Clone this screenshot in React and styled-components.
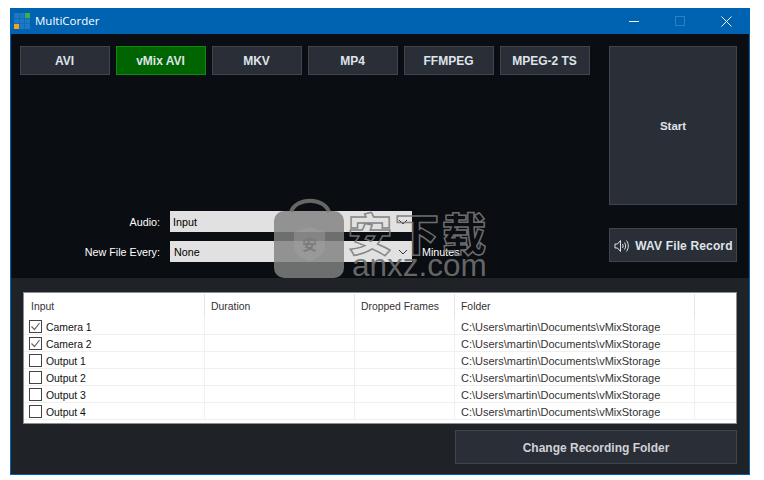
import React from 'react';
import styled, { createGlobalStyle } from 'styled-components';

const GlobalStyle = createGlobalStyle`
	html, body {
		margin: 0;
		padding: 0;
		background: #fff;
	}
	body {
		font-family: "Liberation Sans", Arial, sans-serif;
		font-size: 12px;
	}
`;

const Page = styled.div`
	width: 764px;
	height: 480px;
	padding: 8px 0 0 10px;
	box-sizing: border-box;
	overflow: hidden;
`;

const Window = styled.div`
	position: relative;
	width: 740px;
	height: 467px;
	box-sizing: border-box;
	border: solid #0063b1;
	border-width: 0 1px 1px 1px;
	display: flex;
	flex-direction: column;
	overflow: hidden;
`;

const TitleBar = styled.div`
	height: 26px;
	flex: none;
	background: #0063b1;
	display: flex;
	align-items: center;
	padding-left: 3px;
	color: #fff;
`;

const AppName = styled.span`
	font-family: "Open Sans", sans-serif;
	font-size: 11.5px;
	margin-left: 5px;
	padding-bottom: 2px;
	flex: 1;
`;

const WindowButton = styled.div`
	width: 46px;
	height: 26px;
	display: flex;
	align-items: center;
	justify-content: center;
`;

const TopPanel = styled.div`
	height: 244px;
	flex: none;
	box-sizing: border-box;
	background: #0a0d11;
	padding: 12px 12px 16px 9px;
	display: flex;
	justify-content: space-between;
`;

const LeftColumn = styled.div`
	display: flex;
	flex-direction: column;
	justify-content: space-between;
	width: 570px;
`;

const FormatRow = styled.div`
	display: flex;
	gap: 6px;
`;

const DarkButton = styled.div`
	box-sizing: border-box;
	display: flex;
	align-items: center;
	justify-content: center;
	background: #2a2f37;
	border: 1px solid #3f444d;
	color: #dfe3ea;
	font-family: "Liberation Sans", Arial, sans-serif;
	font-weight: bold;
	font-size: 12px;
`;

const FormatButton = styled(DarkButton)`
	width: 90px;
	height: 29px;
	padding-right: 1px;
	background: ${p => (p.$active ? '#006400' : '#2a2f37')};
	border-color: ${p => (p.$active ? '#0f8a0f' : '#3f444d')};
`;

const FormGrid = styled.div`
	display: grid;
	grid-template-columns: 140px 242px auto;
	column-gap: 10px;
	row-gap: 9px;
	align-items: center;
	color: #fff;
	font-size: 10.75px;
`;

const FieldLabel = styled.label`
	text-align: right;
`;

const Select = styled.div`
	height: 21px;
	background: #e1e1e1;
	color: #000;
	display: flex;
	align-items: center;
	justify-content: space-between;
	padding: 0 3px 0 ${p => p.$inset || 3}px;
	font-size: 10.75px;
`;

const RightColumn = styled.div`
	width: 128px;
	display: flex;
	flex-direction: column;
	gap: 23px;
`;

const StartButton = styled(DarkButton)`
	height: 159px;
	font-size: 11.5px;
`;

const WavButton = styled(DarkButton)`
	height: 34px;
	gap: 5px;
	padding: 1px 0 0 1px;
	font-size: 12px;
	letter-spacing: 0.15px;
	white-space: nowrap;
`;

const BottomPanel = styled.div`
	flex: 1;
	background: #1f2327;
	padding: 14px 12px 10px 12px;
	display: flex;
	flex-direction: column;
	align-items: flex-end;
	gap: 6px;
`;

const Table = styled.div`
	width: 714px;
	height: 132px;
	box-sizing: border-box;
	flex: none;
	background: #fff;
	border: 1px solid #8c8f92;
	color: #111;
	font-size: 10.4px;
`;

const Row = styled.div`
	display: grid;
	grid-template-columns: 181px 150px 100px 240px 1fr;
	height: ${p => (p.$header ? '25px' : '17px')};
	box-sizing: border-box;
	border-bottom: ${p => (p.$header ? 'none' : '1px solid #f0f0f0')};
	align-items: stretch;
`;

const HeadCell = styled.div`
	display: flex;
	align-items: center;
	padding-left: 6px;
	color: #333;
	margin: 1px 0 0;
	border-right: 1px solid #e5e5e5;
	&:first-child {
		padding-left: 7px;
	}
	&:last-child {
		border-right: none;
	}
`;

const Cell = styled.div`
	display: flex;
	align-items: center;
	gap: 4px;
	padding-left: 5px;
	overflow: hidden;
	white-space: nowrap;
	border-right: 1px solid #f0f0f0;
	&:last-child {
		border-right: none;
	}
`;

const InputName = styled.span`
	padding-top: 2px;
`;

const PathText = styled.span`
	padding-top: 1px;
`;

const PathCell = styled(Cell)`
	padding-left: 6px;
	color: #333;
	font-size: 11px;
`;

const CheckBox = styled.span`
	width: 13px;
	height: 13px;
	flex: none;
	box-sizing: border-box;
	border: 1px solid #444;
	background: #fff;
	display: flex;
	align-items: center;
	justify-content: center;
`;

const ChangeButton = styled(DarkButton)`
	width: 282px;
	height: 34px;
	padding-top: 1px;
	color: #cfd2d6;
	font-size: 12px;
`;

const Watermark = styled.div`
	position: absolute;
	left: 263px;
	top: 190px;
	width: 224px;
	height: 80px;
	pointer-events: none;
	overflow: hidden;
`;

const WatermarkMark = styled.span`
	position: absolute;
	left: 28px;
	top: 37px;
	color: #7c7c7c;
	font-family: "Noto Sans CJK SC", sans-serif;
	font-weight: bold;
	font-size: 15px;
	line-height: 18px;
`;

const WatermarkText = styled.div`
	position: absolute;
	left: 74px;
	top: 12px;
	color: transparent;
	-webkit-text-stroke: 1.5px rgba(122, 122, 122, 0.9);
	font-family: "Noto Sans CJK SC", sans-serif;
	font-weight: 900;
	font-size: 44px;
	line-height: 44px;
	letter-spacing: 3px;
	white-space: nowrap;
`;

const WatermarkDomain = styled.div`
	position: absolute;
	left: 78px;
	top: 54px;
	color: rgba(112, 112, 112, 0.92);
	font-family: "Liberation Sans", Arial, sans-serif;
	font-size: 31.5px;
	line-height: 26px;
`;

const formats = ['AVI', 'vMix AVI', 'MKV', 'MP4', 'FFMPEG', 'MPEG-2 TS'];
const inputs = [
	{ name: 'Camera 1', checked: true },
	{ name: 'Camera 2', checked: true },
	{ name: 'Output 1' },
	{ name: 'Output 2' },
	{ name: 'Output 3' },
	{ name: 'Output 4' },
];

const Logo = () => {
	const cells = [];
	for (let y = 0; y < 3; y++) {
		for (let x = 0; x < 3; x++) {
			let fill = '#1f78c4';
			if (x === 2 && y === 0) fill = '#3cb043';
			if (x === 0 && y === 2) fill = '#f7a21b';
			cells.push(<rect key={x + '-' + y} x={x * 5.5} y={y * 5.5} width="5" height="5" fill={fill} />);
		}
	}
	return <svg width="16" height="16" viewBox="0 0 16 16">{cells}</svg>;
};

const Chevron = () => (
	<svg width="10" height="6" viewBox="0 0 10 6" style={{ marginRight: 1 }}>
		<path d="M1 1l4 4 4-4" fill="none" stroke="#333" strokeWidth="1" />
	</svg>
);

const Speaker = () => (
	<svg width="16" height="14" viewBox="0 0 16 14" fill="none" stroke="#dfe3ea" strokeWidth="1">
		<path d="M1 5h2.5L6.5 1.5v11L3.5 9H1z" />
		<path d="M8.5 5c.8 1.2.8 2.8 0 4" />
		<path d="M10.5 3.5c1.5 2 1.5 5 0 7" />
		<path d="M12.5 1.5c2.4 3.4 2.4 7.6 0 11" />
	</svg>
);

const Check = () => (
	<svg width="11" height="11" viewBox="0 0 11 11">
		<path d="M1.5 5.5l3 3 5-6.5" fill="none" stroke="#666" strokeWidth="1.2" />
	</svg>
);

const App = () => (
	<Page>
		<GlobalStyle />
		<Window>
			<TitleBar>
				<Logo />
				<AppName>MultiCorder</AppName>
				<WindowButton>
					<svg width="10" height="10"><path d="M0 5.5h10" stroke="#fff" /></svg>
				</WindowButton>
				<WindowButton>
					<svg width="10" height="10"><rect x=".5" y=".5" width="9" height="9" fill="none" stroke="#2f7fc4" /></svg>
				</WindowButton>
				<WindowButton>
					<svg width="11" height="11"><path d="M.5.5l10 10M10.5.5l-10 10" stroke="#fff" /></svg>
				</WindowButton>
			</TitleBar>
			<TopPanel>
				<LeftColumn>
					<FormatRow>
						{formats.map(f => (
							<FormatButton key={f} $active={f === 'vMix AVI'}>{f}</FormatButton>
						))}
					</FormatRow>
					<FormGrid>
						<FieldLabel>Audio:</FieldLabel>
						<Select>Input<Chevron /></Select>
						<span />
						<FieldLabel>New File Every:</FieldLabel>
						<Select $inset={4}>None<Chevron /></Select>
						<span>Minutes</span>
					</FormGrid>
				</LeftColumn>
				<RightColumn>
					<StartButton>Start</StartButton>
					<WavButton><Speaker />WAV File Record</WavButton>
				</RightColumn>
			</TopPanel>
			<BottomPanel>
				<Table>
					<Row $header>
						<HeadCell>Input</HeadCell>
						<HeadCell>Duration</HeadCell>
						<HeadCell>Dropped Frames</HeadCell>
						<HeadCell>Folder</HeadCell>
						<HeadCell />
					</Row>
					{inputs.map(i => (
						<Row key={i.name}>
							<Cell>
								<CheckBox>{i.checked && <Check />}</CheckBox>
								<InputName>{i.name}</InputName>
							</Cell>
							<Cell />
							<Cell />
							<PathCell><PathText>C:\Users\martin\Documents\vMixStorage</PathText></PathCell>
							<Cell />
						</Row>
					))}
				</Table>
				<ChangeButton>Change Recording Folder</ChangeButton>
			</BottomPanel>
			<Watermark>
				<svg width="72" height="80" viewBox="0 0 72 80">
					<path d="M17 14C22 -1 50 -1 55 14" fill="none" stroke="#666" strokeWidth="4" />
					<rect x="0" y="13" width="70" height="67" rx="10" fill="#828282" fillOpacity="0.83" />
					<path d="M20 34l15.5-5 15.5 5v15c0 7-7 11-15.5 15C27 60 20 56 20 49z" fill="#a6a6a6" fillOpacity="0.4" />
				</svg>
				<WatermarkMark>安</WatermarkMark>
				<WatermarkText>安下载</WatermarkText>
				<WatermarkDomain>anxz.com</WatermarkDomain>
			</Watermark>
		</Window>
	</Page>
);

export default App;
